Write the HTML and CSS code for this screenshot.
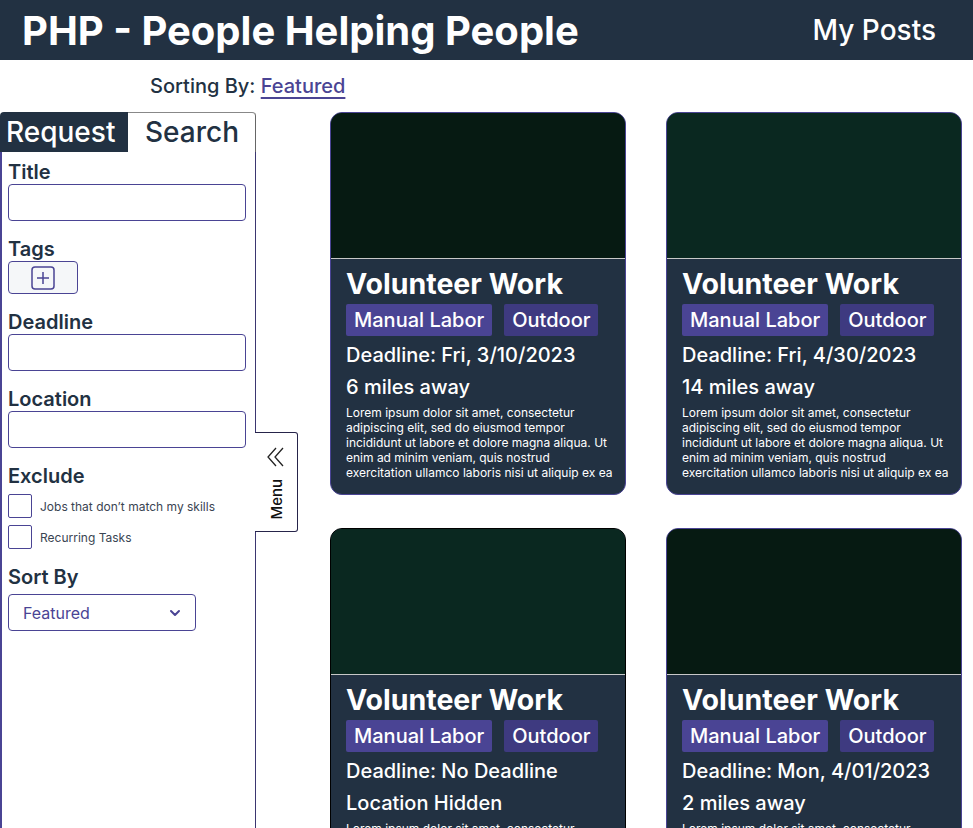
FILE: index.html
```html
<!DOCTYPE html>
<html>
<head>
<meta charset="utf-8">
<link rel="stylesheet" href="styles.css">
<title>PHP - People Helping People</title>
</head>
<body>
	<header class="topbar">
		<h1 class="brand">PHP - People Helping People</h1>
		<a class="nav-link" href="#">My Posts</a>
	</header>

	<div class="sorting">Sorting By: <a href="#">Featured</a></div>

	<main class="layout">
		<aside class="sidebar">
			<div class="tabs">
				<div class="tab tab-active">Request</div>
				<div class="tab tab-search">Search</div>
			</div>
			<div class="panel">
				<label class="field-label">Title</label>
				<input class="field" type="text">

				<label class="field-label">Tags</label>
				<button class="tag-add">
					<svg width="24" height="24" viewBox="0 0 24 24">
						<rect x="1" y="1" width="22" height="22" rx="3" fill="none" stroke="#4a4494" stroke-width="1.5"/>
						<path d="M12 6v12M6 12h12" stroke="#4a4494" stroke-width="1.5"/>
					</svg>
				</button>

				<label class="field-label">Deadline</label>
				<input class="field" type="text">

				<label class="field-label">Location</label>
				<input class="field" type="text">

				<label class="field-label">Exclude</label>
				<div class="check"><span class="box"></span>Jobs that don’t match my skills</div>
				<div class="check"><span class="box"></span>Recurring Tasks</div>

				<label class="field-label">Sort By</label>
				<div class="select">
					<span>Featured</span>
					<svg width="12" height="8" viewBox="0 0 12 8">
						<path d="M2 2l4 4 4-4" fill="none" stroke="#4a4494" stroke-width="2" stroke-linecap="round" stroke-linejoin="round"/>
					</svg>
				</div>
			</div>
			<div class="menu-tab">
				<svg width="20" height="20" viewBox="0 0 20 20">
					<path d="M10 1L2 10l8 9M17 1l-8 9 8 9" fill="none" stroke="#222" stroke-width="1.3"/>
				</svg>
				<span class="menu-text">Menu</span>
			</div>
		</aside>

		<section class="cards">
			<article class="card">
				<div class="card-img img-dark"></div>
				<div class="card-body">
					<h2>Volunteer Work</h2>
					<div class="tags"><span class="tag">Manual Labor</span><span class="tag tag-alt">Outdoor</span></div>
					<p class="meta">Deadline: Fri, 3/10/2023</p>
					<p class="meta">6 miles away</p>
					<p class="desc">Lorem ipsum dolor sit amet, consectetur adipiscing elit, sed do eiusmod tempor incididunt ut labore et dolore magna aliqua. Ut enim ad minim veniam, quis nostrud exercitation ullamco laboris nisi ut aliquip ex ea</p>
				</div>
			</article>
			<article class="card">
				<div class="card-img img-green"></div>
				<div class="card-body">
					<h2>Volunteer Work</h2>
					<div class="tags"><span class="tag">Manual Labor</span><span class="tag tag-alt">Outdoor</span></div>
					<p class="meta">Deadline: Fri, 4/30/2023</p>
					<p class="meta">14 miles away</p>
					<p class="desc">Lorem ipsum dolor sit amet, consectetur adipiscing elit, sed do eiusmod tempor incididunt ut labore et dolore magna aliqua. Ut enim ad minim veniam, quis nostrud exercitation ullamco laboris nisi ut aliquip ex ea</p>
				</div>
			</article>
			<article class="card card-black">
				<div class="card-img img-green"></div>
				<div class="card-body">
					<h2>Volunteer Work</h2>
					<div class="tags"><span class="tag">Manual Labor</span><span class="tag tag-alt">Outdoor</span></div>
					<p class="meta">Deadline: No Deadline</p>
					<p class="meta">Location Hidden</p>
					<p class="desc">Lorem ipsum dolor sit amet, consectetur adipiscing elit, sed do eiusmod tempor incididunt ut labore et dolore magna aliqua. Ut enim ad minim veniam, quis nostrud exercitation ullamco laboris nisi ut aliquip ex ea</p>
				</div>
			</article>
			<article class="card">
				<div class="card-img img-dark"></div>
				<div class="card-body">
					<h2>Volunteer Work</h2>
					<div class="tags"><span class="tag">Manual Labor</span><span class="tag tag-alt">Outdoor</span></div>
					<p class="meta">Deadline: Mon, 4/01/2023</p>
					<p class="meta">2 miles away</p>
					<p class="desc">Lorem ipsum dolor sit amet, consectetur adipiscing elit, sed do eiusmod tempor incididunt ut labore et dolore magna aliqua. Ut enim ad minim veniam, quis nostrud exercitation ullamco laboris nisi ut aliquip ex ea</p>
				</div>
			</article>
		</section>
	</main>
</body>
</html>
```

FILE: styles.css
```css
body {
  margin: 0;
  font-family: Inter, "Noto Sans", sans-serif;
  color: #223142;
  background: #fff;
  overflow: hidden;
}

.topbar {
  height: 60px;
  background: #223142;
  display: flex;
  align-items: center;
  justify-content: space-between;
  padding: 0 37px 0 22px;
}

.brand {
  margin: 0;
  font-size: 40px;
  font-weight: 700;
  color: #fff;
}

.nav-link {
  color: #fff;
  text-decoration: none;
  font-size: 28px;
  font-weight: 500;
}

.sorting {
  height: 52px;
  line-height: 52px;
  padding-left: 150px;
  font-size: 20px;
  font-weight: 500;
}

.sorting a {
  color: #4a4494;
  text-decoration: underline;
  text-underline-offset: 4px;
  text-decoration-thickness: 2px;
}

.layout {
  display: flex;
  align-items: flex-start;
}

/* sidebar */

.sidebar {
  position: relative;
  width: 256px;
  flex-shrink: 0;
}

.tabs {
  display: flex;
  height: 40px;
}

.tab {
  width: 128px;
  box-sizing: border-box;
  font-size: 28px;
  font-weight: 500;
  line-height: 40px;
}

.tab-active {
  background: #223142;
  color: #fff;
  padding-left: 6px;
  border-top-left-radius: 4px;
}

.tab-search {
  border-top: 1px solid #888;
  border-right: 1px solid #666;
  border-top-right-radius: 4px;
  padding-left: 17px;
  line-height: 38px;
}

.panel {
  height: 700px;
  border-left: 2px solid #4a4494;
  border-right: 1px solid #3b3670;
  padding: 8px 9px 0 6px;
  display: flex;
  flex-direction: column;
  align-items: flex-start;
}

.field-label {
  font-size: 20px;
  font-weight: 600;
  line-height: 24px;
}

.field {
  box-sizing: border-box;
  width: 238px;
  height: 37px;
  border: 1px solid #4a4494;
  border-radius: 4px;
  margin: 0 0 16px;
}

.tag-add {
  width: 70px;
  height: 33px;
  background: #f5f7f9;
  border: 1px solid #4a4494;
  border-radius: 4px;
  padding: 0;
  display: flex;
  align-items: center;
  justify-content: center;
  margin: 0 0 16px;
}

.check {
  display: flex;
  align-items: center;
  font-size: 12px;
  color: #3a4452;
  margin-top: 6px;
}

.check + .check {
  margin-top: 7px;
}

.check + .field-label {
  margin-top: 16px;
}

.box {
  width: 24px;
  height: 24px;
  box-sizing: border-box;
  border: 1px solid #4a4494;
  border-radius: 2px;
  margin-right: 8px;
}

.select {
  box-sizing: border-box;
  width: 188px;
  height: 37px;
  margin-top: 5px;
  border: 1px solid #4a4494;
  border-radius: 4px;
  padding: 0 14px 0 14px;
  display: flex;
  align-items: center;
  justify-content: space-between;
  color: #4a4494;
  font-size: 16px;
}

.menu-tab {
  position: absolute;
  left: 255px;
  top: 320px;
  width: 43px;
  height: 100px;
  box-sizing: border-box;
  background: #fff;
  border: 1px solid #26244a;
  border-left: none;
  border-radius: 0 3px 3px 0;
  display: flex;
  flex-direction: column;
  align-items: center;
  padding-top: 14px;
}

.menu-text {
  writing-mode: vertical-rl;
  transform: rotate(180deg);
  font-size: 15px;
  font-weight: 500;
  color: #111;
  margin-top: 12px;
}

/* cards */

.cards {
  display: grid;
  grid-template-columns: 296px 296px;
  column-gap: 40px;
  row-gap: 33px;
  margin-left: 74px;
}

.card {
  border: 1px solid #4a4494;
  border-radius: 12px;
  overflow: hidden;
  background: #223142;
}

.card-black {
  border-color: #000;
}

.card-img {
  height: 145px;
  border-bottom: 1px solid #c8c8c8;
}

.img-dark {
  background: #061a12;
}

.img-green {
  background: #0a2820;
}

.card-body {
  padding: 8px 10px 14px 15px;
  color: #fff;
}

.card-body h2 {
  margin: 0;
  font-size: 28.5px;
  font-weight: 700;
  line-height: 34px;
}

.tags {
  display: flex;
  gap: 12px;
  margin-top: 3px;
}

.tag {
  background: #4a4494;
  height: 32px;
  line-height: 32px;
  padding: 0 8px;
  font-size: 20px;
  font-weight: 500;
  border-radius: 2px;
}

.tag-alt {
  background: #3e3a80;
}

.meta {
  margin: 0;
  font-size: 20px;
  font-weight: 500;
  line-height: 32px;
}

.tags + .meta {
  margin-top: 3px;
}

.desc {
  margin: 2px 0 0;
  font-size: 12px;
  line-height: 15px;
}
```
